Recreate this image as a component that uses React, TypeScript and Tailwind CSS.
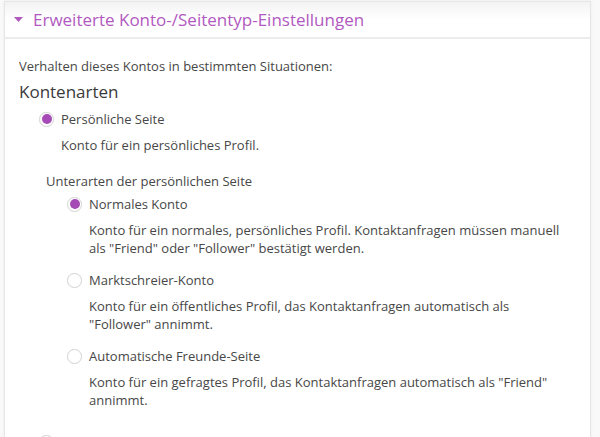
import React from "react";

function Radio({ checked }: { checked: boolean }) {
  return (
    <span className="flex h-[15px] w-[15px] shrink-0 items-center justify-center rounded-full border border-[#d6d6d6] bg-white shadow-[0_0_1px_rgba(0,0,0,0.08)]">
      {checked && <span className="h-[10px] w-[10px] rounded-full bg-[#a64bb6]" />}
    </span>
  );
}

function Option({
  checked,
  label,
  desc,
}: {
  checked: boolean;
  label: string;
  desc: React.ReactNode;
}) {
  return (
    <div>
      <div className="flex h-[18px] items-center">
        <span className="ml-[-22px] mr-[7px] flex">
          <Radio checked={checked} />
        </span>
        <span>{label}</span>
      </div>
      <p className="mt-[8px]">{desc}</p>
    </div>
  );
}

export default function App() {
  return (
    <div
      className="h-[437px] w-[600px] overflow-hidden bg-[#f9f9f9] text-[13px] leading-[18px] text-[#474747]"
      style={{ fontFamily: '"Open Sans", "Noto Sans", sans-serif' }}
    >
      <div className="ml-[4px] mt-[1px] h-[480px] w-[587px] border-x border-t border-[#e6e6e6] bg-white shadow-[0_0_3px_rgba(0,0,0,0.06)]">
        <div className="flex h-[37px] items-center border-b-2 border-[#ececec] bg-gradient-to-b from-[#f3f3f3] via-white to-white pl-[9px]">
          <svg width="9" height="6" viewBox="0 0 9 6" className="mr-[10px] mt-[1px]">
            <path d="M0 0 L9 0 L4.5 5 Z" fill="#b059bf" />
          </svg>
          <span className="text-[17px] leading-[24px] text-[#b159c0]">
            Erweiterte Konto-/Seitentyp-Einstellungen
          </span>
        </div>
        <div className="pl-[14px] pr-[14px] pt-[18px]">
          <p>Verhalten dieses Kontos in bestimmten Situationen:</p>
          <h3 className="mt-[5px] text-[17px] leading-[24px] text-[#3a3a3a]">Kontenarten</h3>
          <div className="mt-[6px] pl-[42px]">
            <Option
              checked
              label="Persönliche Seite"
              desc="Konto für ein persönliches Profil."
            />
            <div className="mt-[18px] ml-[-15px]">
              <p>Unterarten der persönlichen Seite</p>
              <div className="mt-[5px] flex flex-col gap-[14px] pl-[43px] pr-[5px]">
                <Option
                  checked
                  label="Normales Konto"
                  desc={
                    <>
                      Konto für ein normales, persönliches Profil. Kontaktanfragen müssen manuell als "Friend" oder "Follower" bestätigt werden.
                    </>
                  }
                />
                <Option
                  checked={false}
                  label="Marktschreier-Konto"
                  desc={
                    <>
                      Konto für ein öffentliches Profil, das Kontaktanfragen automatisch als "Follower" annimmt.
                    </>
                  }
                />
                <Option
                  checked={false}
                  label="Automatische Freunde-Seite"
                  desc={
                    <>
                      Konto für ein gefragtes Profil, das Kontaktanfragen automatisch als "Friend" annimmt.
                    </>
                  }
                />
              </div>
            </div>
            <div className="mt-[24px] flex h-[18px] items-center">
              <span className="ml-[-22px] flex">
                <Radio checked={false} />
              </span>
            </div>
          </div>
        </div>
      </div>
    </div>
  );
}
